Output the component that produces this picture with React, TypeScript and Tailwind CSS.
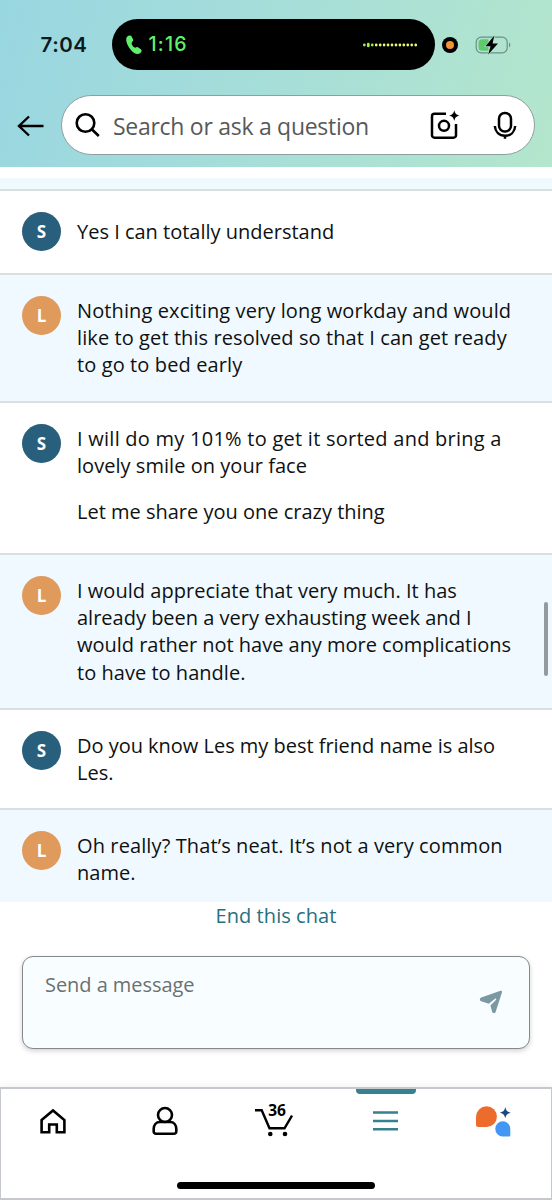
import type { ReactNode } from 'react';

type Sender = 'S' | 'L';

type Line = { text: string; tracking?: string };

type Message = {
    sender: Sender;
    height: string;
    paragraphs: Line[][];
};

const messages: Message[] = [
    {
        sender: 'S',
        height: 'h-[84px]',
        paragraphs: [[{ text: 'Yes I can totally understand' }]],
    },
    {
        sender: 'L',
        height: 'h-[128px]',
        paragraphs: [[
            { text: 'Nothing exciting very long workday and would', tracking: 'tracking-[0.11px]' },
            { text: 'like to get this resolved so that I can get ready', tracking: 'tracking-[0.09px]' },
            { text: 'to go to bed early', tracking: 'tracking-[0.11px]' },
        ]],
    },
    {
        sender: 'S',
        height: 'h-[152px]',
        paragraphs: [
            [
                { text: 'I will do my 101% to get it sorted and bring a', tracking: 'tracking-[0.25px]' },
                { text: 'lovely smile on your face', tracking: 'tracking-[0.04px]' },
            ],
            [{ text: 'Let me share you one crazy thing' }],
        ],
    },
    {
        sender: 'L',
        height: 'h-[155px]',
        paragraphs: [[
            { text: 'I would appreciate that very much. It has', tracking: 'tracking-[0.03px]' },
            { text: 'already been a very exhausting week and I' },
            { text: 'would rather not have any more complications', tracking: 'tracking-[-0.02px]' },
            { text: 'to have to handle.', tracking: 'tracking-[0.03px]' },
        ]],
    },
    {
        sender: 'S',
        height: 'h-[100px]',
        paragraphs: [[
            { text: 'Do you know Les my best friend name is also', tracking: 'tracking-[-0.02px]' },
            { text: 'Les.' },
        ]],
    },
    {
        sender: 'L',
        height: 'h-[94px]',
        paragraphs: [[
            { text: 'Oh really? That’s neat. It’s not a very common', tracking: 'tracking-[0.11px]' },
            { text: 'name.' },
        ]],
    },
];

const StatusBar = () => (
    <div className="flex h-[51px] items-center font-[Inter,sans-serif]">
        <span className="ml-[40.500px] w-[71.500px] pt-[1px] text-[20.5px] font-semibold tracking-[0.55px] text-[#0b1a1c]">7:04</span>
        <div className="flex h-full w-[323px] items-center rounded-full bg-black pl-[13px] pr-[17px]">
            <svg width="18" height="22" viewBox="0 0 18 22" fill="#62f06c">
                <path d="M1.800 3C3 1.200 5.600.8 6.500 2.300l1.600 3.300c.5 1.400-.9 2.200-1.500 3.300-.4.900 1.300 3.700 3 4.700 1 .500 2-.8 3.300-.4l3 2c1.400 1.100.7 3-.9 4-2.600 1.700-6.200.3-9-3.200C2.500 12 .1 6.200 1.800 3Z" />
            </svg>
            <span className="ml-[5.500px] text-[19.5px] font-medium tracking-[1.200px] text-[#62f06c]">1:16</span>
            <svg className="ml-auto mr-[1px]" width="54" height="6" viewBox="0 0 54 6">
                {Array.from({ length: 14 }, (_, i) => (
                    <rect key={i} x={i * 3.95} y={i === 1 ? 0.8 : 1.6} width="2.700" height={i === 1 ? 4.4 : 2.8} rx="1.300" fill={i < 3 ? '#a5ee50' : '#e9fa6a'} />
                ))}
            </svg>
        </div>
        <div className="ml-[7px] flex size-4 items-center justify-center rounded-full bg-black">
            <div className="size-2 rounded-full bg-[#f29335]" />
        </div>
        <svg className="ml-[17px]" width="38" height="20" viewBox="0 0 38 20">
            <rect x="1.200" y="2.200" width="31" height="15.600" rx="5" fill="none" stroke="#699184" strokeWidth="1.200" />
            <path d="M7 4.300h6.500v11.400H7a3.500 3.500 0 0 1-3.500-3.500V7.800A3.500 3.500 0 0 1 7 4.300Z" fill="#5fca6c" />
            <path d="M34 7.600c1.800.7 1.800 4.100 0 4.800Z" fill="#699184" />
            <path d="M19.300.6 10.500 11.300h5L13.200 19.400 23 8.600h-5.400Z" fill="#000" stroke="#b3e5d3" strokeWidth="1.200" paintOrder="stroke" />
        </svg>
    </div>
);

const SearchBar = () => (
    <div className="mt-[24px] flex h-[61px] items-center">
        <svg className="mt-[3px] ml-[17px]" width="28" height="22" viewBox="0 0 28 22" fill="none" stroke="#000" strokeWidth="2.400">
            <path d="M26.500 11H2M12 1.500 2 11l10 9.500" />
        </svg>
        <div className="ml-[16px] flex h-[60px] w-[474px] items-center rounded-full border border-[#8f9f9f] bg-white">
            <svg className="ml-[13px] mt-[1px]" width="26" height="26" viewBox="0 0 26 26" fill="none" stroke="#000" strokeWidth="2.600">
                <circle cx="10.500" cy="11" r="8.800" />
                <path d="m16.500 17 7.300 7" />
            </svg>
            <span className="ml-[12px] mt-[3px] w-[317px] whitespace-nowrap text-[23px] tracking-[-0.28px] text-[#565959]">Search or ask a question</span>
            <svg width="30" height="30" viewBox="0 0 30 30" fill="none" stroke="#000" strokeWidth="2.500">
                <path d="M16 3.700H4.500A2.500 2.500 0 0 0 2 6.200v19a2.500 2.500 0 0 0 2.500 2.500h19a2.500 2.500 0 0 0 2.500-2.500V14" />
                <circle cx="14" cy="15.800" r="5" />
                <path d="M24.300.2c1 3.600 1.700 4.300 5.400 5.300-3.700 1-4.400 1.700-5.400 5.400-1-3.700-1.700-4.400-5.400-5.400 3.700-1 4.400-1.700 5.400-5.300Z" fill="#000" stroke="none" />
            </svg>
            <svg className="ml-[33px]" width="24" height="30" viewBox="0 0 24 30" fill="none" stroke="#000" strokeWidth="2.500">
                <rect x="6" y="3" width="12" height="18.500" rx="5.800" />
                <path d="M1.800 16c.5 6 4.500 9.800 10.200 9.800S21.700 22 22.200 16M12 25.500v3.300" />
            </svg>
        </div>
    </div>
);

const MessageRow = ({ message }: { message: Message }) => {
    const agent = message.sender === 'S';
    const singleLine = message.paragraphs.length === 1 && message.paragraphs[0].length === 1;
    return (
        <div className={`flex shrink-0 border-t-2 border-[#dadfe1] pl-[22px] pt-[21px] ${message.height} ${agent ? 'bg-white' : 'bg-[#f0f9ff]'}`}>
            <div className={`mr-[16px] flex size-[39px] shrink-0 items-center justify-center rounded-full text-[17px] font-bold text-white ${agent ? 'bg-[#285f7c]' : 'bg-[#e09b5c]'}`}>
                {message.sender}
            </div>
            <div className={`flex flex-col gap-[19px] ${singleLine ? 'pt-[6px]' : 'pt-[0.500px]'}`}>
                {message.paragraphs.map((lines, i) => (
                    <p key={i} className="whitespace-nowrap text-[20px] leading-[27.400px] text-[#0f1111]">
                        {lines.map((line) => (
                            <span key={line.text} className={`block ${line.tracking ?? ''}`}>{line.text}</span>
                        ))}
                    </p>
                ))}
            </div>
        </div>
    );
};

const Tab = ({ active, children }: { active?: boolean; children: ReactNode }) => (
    <div className="flex w-[110.500px] flex-col items-center">
        <div className={`h-[5px] w-[60px] rounded-b-[4px] ${active ? 'bg-[#37808f]' : ''}`} />
        <div className="flex h-[54px] items-center">{children}</div>
    </div>
);

const TabBar = () => (
    <nav className="relative flex h-[113px] w-full border-2 border-x-[1.500px] border-[#c5c8cd] bg-white shadow-[0_-2px_8px_rgba(0,0,0,0.05)]">
        <div className="-ml-[2px] flex h-[60px]">
            <Tab>
                <svg className="mr-[2px]" width="26" height="26" viewBox="0 0 26 26" fill="none" stroke="#000" strokeWidth="2.600">
                    <path d="M1.600 12 13 2.500 24.400 12v12.300h-7.600v-7.800H9.200v7.800H1.600Z" />
                </svg>
            </Tab>
            <Tab>
                <svg width="26" height="30" viewBox="0 0 26 30" fill="none" stroke="#000" strokeWidth="2.600">
                    <circle cx="13" cy="9" r="7" />
                    <path d="M8 16h10c4 0 6.300 3 6.300 7v2.500A2.300 2.300 0 0 1 22 27.800H4a2.300 2.300 0 0 1-2.300-2.300V23c0-4 2.300-7 6.300-7Z" />
                </svg>
            </Tab>
            <Tab>
                <div className="relative mr-[2px]">
                    <svg width="38" height="34" viewBox="0 0 38 34" fill="none" stroke="#000" strokeWidth="2.400">
                        <path d="M0 6.300h6.700l7.800 18h15L37 11.500" />
                        <circle cx="15.300" cy="30" r="2.300" fill="#000" stroke="none" />
                        <circle cx="30" cy="30" r="2.300" fill="#000" stroke="none" />
                    </svg>
                    <span className="absolute left-[13px] top-[-3px] text-[15.500px] leading-[18px] font-bold text-black">36</span>
                </div>
            </Tab>
            <Tab active>
                <svg width="25" height="20" viewBox="0 0 25 20" fill="none" stroke="#37808f" strokeWidth="2.400">
                    <path d="M0 1.500h25M0 10h25M0 18.300h25" />
                </svg>
            </Tab>
            <Tab>
                <svg className="mr-[6px]" width="35" height="31" viewBox="0 0 35 31">
                    <path d="M10.500.3a10.400 10.400 0 0 1 0 20.800H2a2 2 0 0 1-2-2v-8.300A10.500 10.500 0 0 1 10.500.3Z" fill="#ed6c2c" />
                    <path d="M26.800 15.300a7.500 7.500 0 0 1 7.500 7.500v6.800a.8.800 0 0 1-.8.800h-6.700a7.500 7.500 0 0 1 0-15.100Z" fill="#4296f4" />
                    <path d="M29.300 1.100c1 3.900 1.800 4.600 5.500 5.600-3.700 1-4.500 1.700-5.500 5.600-1-3.900-1.800-4.600-5.500-5.600 3.700-1 4.500-1.700 5.500-5.600Z" fill="#1d477c" />
                </svg>
            </Tab>
        </div>
        {/* home indicator */}
        <div className="absolute left-[176px] top-[93px] h-[7px] w-[198px] rounded-full bg-black" />
    </nav>
);

const App = () => (
    <div className="flex h-[1200px] w-[552px] flex-col overflow-hidden bg-white font-['Open_Sans','Noto_Sans',sans-serif]">
        <header className="h-[167px] shrink-0 bg-[linear-gradient(105deg,#98d6e1_0%,#a5ddd9_45%,#b4e6cd_100%)] pt-[19px]">
            <StatusBar />
            <SearchBar />
        </header>

        <main className="relative flex h-[735px] shrink-0 flex-col overflow-hidden pt-[11px]">
            <div className="h-[11px] shrink-0 bg-[#f0f9ff]" />
            {messages.map((message, i) => (
                <MessageRow key={i} message={message} />
            ))}
            {/* scroll thumb */}
            <div className="absolute right-[4px] top-[435px] h-[74px] w-[4px] rounded-full bg-[#949b9f]" />
        </main>

        <section className="flex h-[185px] shrink-0 flex-col items-center">
            <button className="h-[27px] text-[20px] leading-[27px] tracking-[0.07px] text-[#27707f]">End this chat</button>
            <div className="mt-[27px] flex h-[93px] w-[508px] justify-between rounded-[11px] border-[1.500px] border-[#858989] bg-[#f8feff] pl-[22px] pr-[26px] shadow-[0_2px_5px_rgba(0,0,0,0.18)]">
                <span className="mt-[14px] text-[20px] leading-[27px] tracking-[-0.05px] text-[#6c7070]">Send a message</span>
                <svg className="mt-[33px]" width="24" height="24" viewBox="0 0 24 24">
                    <path d="M21.500.8c1-.2 1.800.5 1.500 1.500l-6.300 19.500c-.5 1.600-3 1.700-3.500.1L11.400 15.500l5.700-5.700c.6-.8-.3-1.700-1.100-1.100l-6.200 5.100-7.700-2.500C.4 10.700.4 8 2.200 7.400Z" fill="#7c98a3" />
                </svg>
            </div>
        </section>

        <TabBar />
    </div>
);

export default App;
